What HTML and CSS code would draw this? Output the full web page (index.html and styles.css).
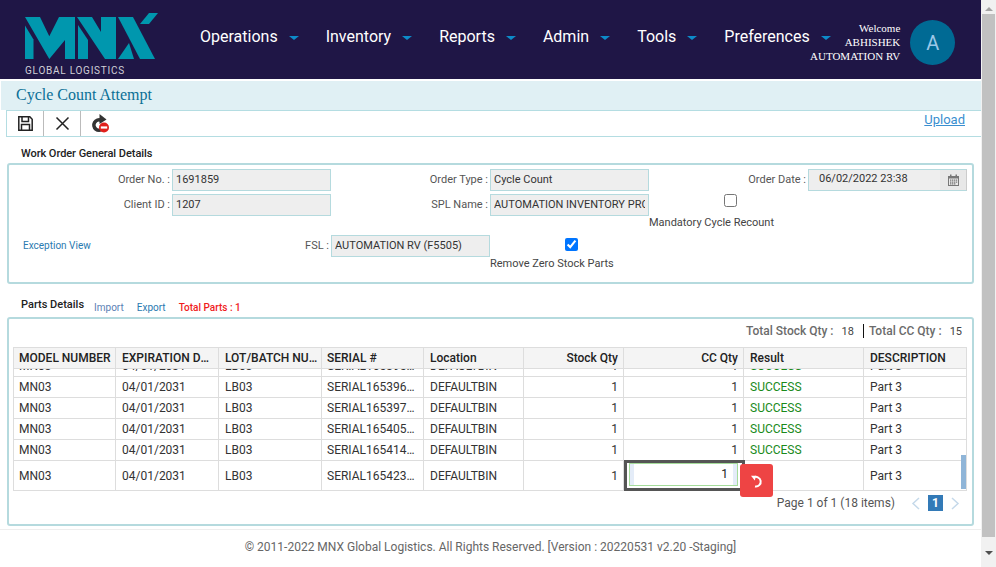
FILE: index.html
```html
<!DOCTYPE html>
<html lang="en">
<head>
    <meta charset="UTF-8">
    <meta name="viewport" content="width=device-width, initial-scale=1.0">
    <title>Cycle Count Attempt</title>
    <link rel="stylesheet" href="styles.css">
</head>
<body>
<div class="window">
    <div class="page">
        <!-- Top navigation -->
        <header class="topbar">
            <div class="brand">
                <svg class="brand-mark" width="170" height="62" viewBox="0 0 170 62" aria-hidden="true">
                    <g fill="#0097ae">
                        <polygon points="25,25.5 33.5,39.5 33.5,59 25,59"/>
                        <polygon points="25,17 40,17 49.3,36.3 59,17 75,17 75,59 65,59 65,40 49.3,59"/>
                        <polygon points="78,25 88,40 88,59 78,59"/>
                        <polygon points="77,17 92,17 101,32 101,17 116,17 116,59 105,59"/>
                        <polygon points="118,17 133,17 155,59 140,59"/>
                        <polygon points="140,24 149,13 158,13 149,24"/>
                        <polygon points="118,59 129,43 134,59"/>
                    </g>
                </svg>
                <span class="brand-name">GLOBAL LOGISTICS</span>
            </div>
            <nav class="menu">
                <a class="menu-item">Operations<i class="caret"></i></a>
                <a class="menu-item">Inventory<i class="caret"></i></a>
                <a class="menu-item">Reports<i class="caret"></i></a>
                <a class="menu-item">Admin<i class="caret"></i></a>
                <a class="menu-item">Tools<i class="caret"></i></a>
                <a class="menu-item">Preferences<i class="caret"></i></a>
            </nav>
            <div class="user">
                <div class="user-text">Welcome<br>ABHISHEK<br>AUTOMATION RV</div>
                <div class="avatar">A</div>
            </div>
        </header>

        <div class="title-bar">Cycle Count Attempt</div>

        <div class="toolbar">
            <button class="tool" type="button" title="Save">
                <svg width="17" height="17" viewBox="0 0 17 17" fill="none" stroke="#222" stroke-width="1.5">
                    <path d="M1.8 1.8h11l2.4 2.4v11H1.8z"/>
                    <path d="M5 2v4.5h6.5V2M4.5 15v-5.5h8V15"/>
                </svg>
            </button>
            <button class="tool" type="button" title="Cancel">
                <svg width="15" height="15" viewBox="0 0 15 15" fill="none" stroke="#222" stroke-width="1.5">
                    <path d="M1.5 1.5l12 12M13.5 1.5l-12 12"/>
                </svg>
            </button>
            <button class="tool tool-last" type="button" title="Reset">
                <svg width="21" height="21" viewBox="0 0 21 21">
                    <path d="M12 7.2A5.2 5.2 0 1 0 13.5 16" fill="none" stroke="#333" stroke-width="3.6"/>
                    <polygon points="10.5,1 17.5,6.5 10.5,11" fill="#333"/>
                    <circle cx="15" cy="14.5" r="5" fill="#e0201c"/>
                    <rect x="11.8" y="13.4" width="6.4" height="2.2" fill="#fff"/>
                </svg>
            </button>
            <a class="upload">Upload</a>
        </div>

        <h2 class="section-label">Work Order General Details</h2>
        <section class="panel details">
            <label class="field-label">Order No. :</label>
            <input class="field" type="text" value="1691859" readonly>
            <label class="field-label">Order Type :</label>
            <input class="field" type="text" value="Cycle Count" readonly>
            <label class="field-label">Order Date :</label>
            <div class="date-field">
                <span class="date-value">06/02/2022 23:38</span>
                <span class="date-btn">
                    <svg width="11" height="12" viewBox="0 0 11 12" fill="#777">
                        <path d="M0 2h2V.5h1.5V2h4V.5H9V2h2v10H0zM1 4.5V11h9V4.5z"/>
                        <path d="M2 5.5h1.4v1.2H2zM4 5.5h1.4v1.2H4zM6 5.5h1.4v1.2H6zM8 5.5h1.2v1.2H8zM2 7.5h1.4v1.2H2zM4 7.5h1.4v1.2H4zM6 7.5h1.4v1.2H6zM8 7.5h1.2v1.2H8zM2 9.3h1.4v1.2H2zM4 9.3h1.4v1.2H4zM6 9.3h1.4v1.2H6z"/>
                    </svg>
                </span>
            </div>

            <label class="field-label">Client ID :</label>
            <input class="field" type="text" value="1207" readonly>
            <label class="field-label">SPL Name :</label>
            <input class="field" type="text" value="AUTOMATION INVENTORY PROFILE" readonly>
            <div class="check-block mandatory">
                <input type="checkbox">
                <span>Mandatory Cycle Recount</span>
            </div>

            <a class="exception">Exception View</a>
            <label class="field-label fsl-label">FSL :</label>
            <input class="field fsl-field" type="text" value="AUTOMATION RV (F5505)" readonly>
            <div class="check-block zero-stock">
                <input type="checkbox" checked>
                <span>Remove Zero Stock Parts</span>
            </div>
        </section>

        <div class="parts-head">
            <h2 class="section-label">Parts Details</h2>
            <a class="link-import">Import</a>
            <a class="link-export">Export</a>
            <span class="total-parts">Total Parts : 1</span>
        </div>
        <section class="panel parts">
            <div class="totals">
                <span class="total-name">Total Stock Qty :</span><span class="total-val">18</span>
                <span class="total-sep"></span>
                <span class="total-name">Total CC Qty :</span><span class="total-val">15</span>
            </div>

            <div class="grid-wrap">
                <table class="grid">
                    <colgroup>
                        <col class="c1"><col class="c2"><col class="c3"><col class="c4"><col class="c5"><col class="c6"><col class="c7"><col class="c8"><col class="c9">
                    </colgroup>
                    <thead>
                        <tr>
                            <th>MODEL NUMBER</th>
                            <th>EXPIRATION DATE</th>
                            <th>LOT/BATCH NUMBER</th>
                            <th>SERIAL #</th>
                            <th>Location</th>
                            <th class="num">Stock Qty</th>
                            <th class="num">CC Qty</th>
                            <th>Result</th>
                            <th>DESCRIPTION</th>
                        </tr>
                    </thead>
                </table>
                <div class="grid-body">
                    <table class="grid">
                        <colgroup>
                            <col class="c1"><col class="c2"><col class="c3"><col class="c4"><col class="c5"><col class="c6"><col class="c7"><col class="c8"><col class="c9">
                        </colgroup>
                        <tbody>
                            <tr><td>MN03</td><td>04/01/2031</td><td>LB03</td><td>SERIAL1653950001</td><td>DEFAULTBIN</td><td class="num">1</td><td class="num">1</td><td class="ok">SUCCESS</td><td>Part 3</td></tr>
                            <tr><td>MN03</td><td>04/01/2031</td><td>LB03</td><td>SERIAL1653960001</td><td>DEFAULTBIN</td><td class="num">1</td><td class="num">1</td><td class="ok">SUCCESS</td><td>Part 3</td></tr>
                            <tr><td>MN03</td><td>04/01/2031</td><td>LB03</td><td>SERIAL1653970001</td><td>DEFAULTBIN</td><td class="num">1</td><td class="num">1</td><td class="ok">SUCCESS</td><td>Part 3</td></tr>
                            <tr><td>MN03</td><td>04/01/2031</td><td>LB03</td><td>SERIAL1654050001</td><td>DEFAULTBIN</td><td class="num">1</td><td class="num">1</td><td class="ok">SUCCESS</td><td>Part 3</td></tr>
                            <tr><td>MN03</td><td>04/01/2031</td><td>LB03</td><td>SERIAL1654140001</td><td>DEFAULTBIN</td><td class="num">1</td><td class="num">1</td><td class="ok">SUCCESS</td><td>Part 3</td></tr>
                            <tr class="row-edit"><td>MN03</td><td>04/01/2031</td><td>LB03</td><td>SERIAL1654230001</td><td>DEFAULTBIN</td><td class="num">1</td><td class="cell-edit"></td><td></td><td>Part 3</td></tr>
                        </tbody>
                    </table>
                </div>
                <div class="edit-frame">
                    <input class="edit-input" type="text" value="1">
                </div>
                <button class="revert" type="button" title="Revert">
                    <svg width="14" height="14" viewBox="0 0 14 14" fill="none" stroke="#fff" stroke-width="2">
                        <path d="M3.4 3.6A4.8 4.8 0 1 1 5 12.4"/>
                        <polygon points="1,1.8 6,1.8 4.8,6.6" fill="#fff" stroke="none"/>
                    </svg>
                </button>
                <div class="grid-thumb"></div>
            </div>

            <div class="pager">
                <span class="pager-info">Page 1 of 1 (18 items)</span>
                <svg class="chev" width="9" height="13" viewBox="0 0 9 13" fill="none" stroke="#c5d9ea" stroke-width="1.5"><path d="M8 1L2 6.5 8 12"/></svg>
                <span class="pager-num">1</span>
                <svg class="chev" width="9" height="13" viewBox="0 0 9 13" fill="none" stroke="#c5d9ea" stroke-width="1.5"><path d="M1 1l6 5.5L1 12"/></svg>
            </div>
        </section>

        <footer class="footer">© 2011-2022 MNX Global Logistics. All Rights Reserved. [Version : 20220531 v2.20 -Staging]</footer>
    </div>

    <!-- Page scrollbar -->
    <div class="scrollbar">
        <i class="arrow-up"></i>
        <div class="thumb"></div>
        <i class="arrow-down"></i>
    </div>
</div>
</body>
</html>
```

FILE: styles.css
```css
* {
    box-sizing: border-box;
}

html, body {
    margin: 0;
    height: 567px;
    overflow: hidden;
}

body {
    font-family: Roboto, "Liberation Sans", sans-serif;
    font-size: 12px;
    color: #333;
    background: #fff;
}

.window {
    display: flex;
    height: 567px;
}

.page {
    width: 981px;
    flex: none;
    display: flex;
    flex-direction: column;
}

/* Header */
.topbar {
    height: 79px;
    flex: none;
    background: #1f1646;
    display: flex;
    align-items: flex-start;
}

.brand {
    width: 200px;
    flex: none;
    height: 79px;
}

.brand-mark {
    display: block;
}

.brand-name {
    display: block;
    margin: 3px 0 0 25px;
    font-size: 10px;
    line-height: 12px;
    letter-spacing: 0.75px;
    color: #cfcfd6;
    white-space: nowrap;
}

/* menu runs a little under the user block, same as the live page */
.menu {
    width: 610px;
    flex: none;
    display: flex;
    padding-top: 27px;
    gap: 27px;
}

.menu-item {
    display: flex;
    flex: none;
    align-items: center;
    gap: 11px;
    font-size: 16px;
    line-height: 20px;
    color: #fff;
}

.caret {
    width: 0;
    height: 0;
    margin-top: 1px;
    border-left: 5px solid transparent;
    border-right: 5px solid transparent;
    border-top: 4px solid #0d8bc9;
}

.user {
    margin-left: auto;
    padding: 20px 26px 0 0;
    display: flex;
    gap: 10px;
}

.user-text {
    padding-top: 1px;
    font-family: "Liberation Serif", serif;
    font-size: 11px;
    line-height: 14px;
    color: #fff;
    text-align: right;
    white-space: nowrap;
}

.avatar {
    width: 45px;
    height: 45px;
    border-radius: 50%;
    background: #006a94;
    color: #9cc7e8;
    font-size: 20px;
    display: flex;
    align-items: center;
    justify-content: center;
}

.title-bar {
    margin: 2px 0 0 1px;
    height: 29px;
    flex: none;
    padding-left: 15px;
    background: #e0f0f4;
    font-family: "Liberation Serif", serif;
    font-size: 16px;
    line-height: 28px;
    color: #0a6f96;
}

/* Toolbar */
.toolbar {
    margin-left: 6px;
    height: 27px;
    flex: none;
    display: flex;
    border-top: 1px solid #b4dde2;
    border-bottom: 1px solid #b4dde2;
    border-left: 1px solid #b4dde2;
}

.tool {
    width: 37px;
    padding: 0;
    border: 0;
    border-right: 1px solid #bbb;
    background: none;
    display: flex;
    align-items: center;
    justify-content: center;
}

.tool-last {
    border-right: 0;
}

.upload {
    margin-left: auto;
    padding-right: 16px;
    font-size: 13px;
    line-height: 17px;
    color: #3a8fd0;
    text-decoration: underline;
}

/* Panels */
.section-label {
    margin: 0;
    font-size: 11px;
    font-weight: 500;
    line-height: 14px;
    color: #222;
}

.toolbar + .section-label {
    padding: 10px 0 2px 21px;
    height: 26px;
    flex: none;
    letter-spacing: -0.05px;
}

.panel {
    margin-left: 7px;
    width: 967px;
    flex: none;
    border: 2px solid #b5dade;
    border-radius: 3px;
}

.details {
    height: 121px;
    padding-top: 4px;
    display: grid;
    grid-template-columns: 163px repeat(5, 159px);
    grid-template-rows: 22px 22px 13px 22px;
    row-gap: 3px;
    align-items: center;
    font-size: 11px;
}

.field-label {
    padding: 0 2px 2px 0;
    text-align: right;
    color: #555;
    white-space: nowrap;
}

.field {
    width: 159px;
    height: 22px;
    padding: 0 3px 2px;
    border: 1px solid #b5dade;
    background: #eee;
    font: inherit;
    color: #333;
    outline: none;
}

.date-field {
    display: flex;
    height: 22px;
    background: #eee;
    border: 1px solid #b5dade;
    border-right-color: #ccc;
}

.date-value {
    flex: 1;
    padding-left: 10px;
    line-height: 18px;
}

.date-btn {
    width: 26px;
    background: #e8e8e8;
    display: flex;
    align-items: center;
    justify-content: center;
}

.exception {
    grid-row: 4;
    grid-column: 1;
    padding: 0 0 2px 14px;
    font-size: 10px;
    color: #2a7ab0;
}

.fsl-label {
    grid-row: 4;
    grid-column: 2;
}

.fsl-field {
    grid-row: 4;
    grid-column: 3;
}

.check-block {
    align-self: start;
    color: #444;
    line-height: 14px;
    white-space: nowrap;
}

.check-block input {
    display: block;
    width: 13px;
    height: 13px;
    margin: 0 0 9px 75px;
}

.mandatory {
    grid-row: 2 / span 2;
    grid-column: 5;
}

.zero-stock {
    grid-row: 4 / span 2;
    grid-column: 4;
    padding-top: 3px;
}

.zero-stock input {
    margin-bottom: 6px;
}

.parts-head {
    height: 33px;
    flex: none;
    padding: 14px 0 0 21px;
    display: flex;
    align-items: flex-start;
}

.parts-head a, .total-parts {
    margin-top: 3px;
    font-size: 10px;
    line-height: 14px;
}

.link-import {
    margin-left: 10px;
    color: #5b7fb5;
}

.link-export {
    margin-left: 13px;
    color: #2a7ab0;
}

.total-parts {
    margin-left: 13px;
    color: #f01c1c;
    font-weight: 500;
}

.parts {
    height: 209px;
    padding: 0 5px 0 4px;
}

.totals {
    height: 28px;
    padding: 0 5px 4px 0;
    display: flex;
    justify-content: flex-end;
    align-items: center;
}

.total-name {
    color: #6b6b6b;
    font-weight: 500;
}

.total-val {
    margin-left: 8px;
    font-size: 11px;
    color: #444;
}

.total-sep {
    width: 1px;
    height: 14px;
    margin: 0 5px 0 9px;
    background: #111;
}

/* Data grid */
.grid-wrap {
    position: relative;
    width: 954px;
}

.grid {
    width: 954px;
    table-layout: fixed;
    border-collapse: separate;
    border-spacing: 0;
}

.c1, .c2, .c3, .c9 { width: 103px; }
.c4 { width: 102px; }
.c5, .c6 { width: 100px; }
.c7, .c8 { width: 120px; }

.grid th, .grid td {
    padding: 0 5px 0 6px;
    overflow: hidden;
    white-space: nowrap;
    text-overflow: ellipsis;
    border-right: 1px solid #ddd;
    border-bottom: 1px solid #ddd;
    text-align: left;
}

.grid th:first-child, .grid td:first-child {
    border-left: 1px solid #ddd;
    padding-left: 5px;
}

.grid th:nth-child(4), .grid td:nth-child(4) {
    padding-left: 5px;
}

.grid th {
    height: 22px;
    padding-right: 3px;
    border-top: 1px solid #ddd;
    background: #f4f4f4;
    font-weight: 500;
    color: #222;
}

.grid th.num {
    padding-right: 5px;
}

.grid td {
    height: 21px;
    color: #333;
}

.grid .num {
    text-align: right;
}

.grid .ok {
    color: #1a8a1a;
}

.row-edit td {
    height: 30px;
}

.grid-body {
    height: 122px;
    overflow: hidden;
    display: flex;
    flex-direction: column;
    justify-content: flex-end;
}

.grid-body .grid {
    flex: none;
}

.edit-frame {
    position: absolute;
    left: 611px;
    top: 113px;
    width: 121px;
    height: 31px;
    padding-left: 2px;
    border: 3px solid #555;
}

.edit-input {
    display: block;
    width: 109px;
    height: 23px;
    padding: 0 9px 1px 0;
    border: 1px solid #a5dc9b;
    background: linear-gradient(to right, #e4ecf8 4px, #fff 4px, #fff calc(100% - 4px), #e4ecf8 calc(100% - 4px));
    text-align: right;
    font: inherit;
    color: #222;
    outline: none;
}

.revert {
    position: absolute;
    left: 727px;
    top: 117px;
    width: 33px;
    height: 33px;
    padding: 0;
    border: 0;
    border-radius: 3px;
    background: #ee4444;
    display: flex;
    align-items: center;
    justify-content: center;
}

.grid-thumb {
    position: absolute;
    left: 948px;
    top: 108px;
    width: 5px;
    height: 34px;
    background: #8fb5d8;
}

.pager {
    margin-top: 4px;
    padding-right: 7px;
    height: 16px;
    display: flex;
    justify-content: flex-end;
    align-items: center;
}

.pager-info {
    margin-right: 16px;
    color: #555;
}

.pager-num {
    width: 15px;
    height: 16px;
    margin: 0 8px 0 8px;
    background: #337ab7;
    color: #fff;
    font-weight: 700;
    text-align: center;
    line-height: 16px;
}

.footer {
    margin-top: 3px;
    flex: 1;
    border-top: 1px solid #eee;
    padding-top: 10px;
    text-align: center;
    line-height: 15px;
    color: #666;
}

/* Fake page scrollbar, the screenshot was taken part way down */
.scrollbar {
    width: 15px;
    flex: none;
    background: #f1f1f1;
    display: flex;
    flex-direction: column;
    align-items: center;
}

.thumb {
    width: 13px;
    height: 523px;
    margin-top: 3px;
    background: #c1c1c1;
}

.arrow-up, .arrow-down {
    width: 0;
    height: 0;
    border-left: 4px solid transparent;
    border-right: 4px solid transparent;
}

.arrow-up {
    margin-top: 7px;
    border-bottom: 4px solid #a3a3a3;
}

.arrow-down {
    margin-top: 14px;
    border-top: 4px solid #505050;
}
```
